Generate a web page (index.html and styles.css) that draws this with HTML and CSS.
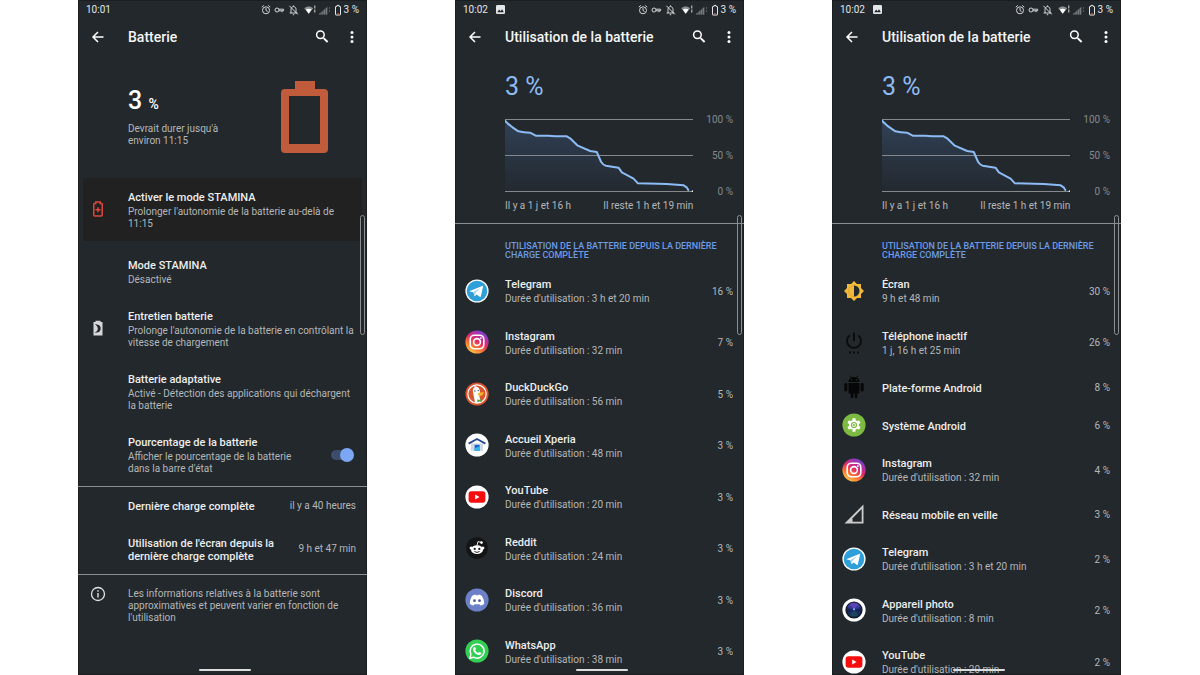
FILE: index.html
```
<!DOCTYPE html>
<html lang="fr">
<head>
    <meta charset="UTF-8">
    <title>Batterie</title>
    <link rel="stylesheet" href="styles.css">
</head>
<body>
    <!-- shared icons -->
    <svg class="sprite" width="0" height="0" aria-hidden="true">
        <defs>
            <linearGradient id="g-insta" x1="0.2" y1="1" x2="0.8" y2="0">
                <stop offset="0" stop-color="#ffd254"/>
                <stop offset="0.3" stop-color="#f9772e"/>
                <stop offset="0.55" stop-color="#e0286c"/>
                <stop offset="0.8" stop-color="#a333b5"/>
                <stop offset="1" stop-color="#5b4fd8"/>
            </linearGradient>
            <linearGradient id="g-photo" x1="0" y1="0" x2="0" y2="1">
                <stop offset="0" stop-color="#5b3bb4"/>
                <stop offset="0.4" stop-color="#25368a"/>
                <stop offset="1" stop-color="#0c2438"/>
            </linearGradient>
            <linearGradient id="g-chart" x1="0" y1="0" x2="0" y2="1">
                <stop offset="0" stop-color="#304056"/>
                <stop offset="1" stop-color="#23292f"/>
            </linearGradient>
        </defs>
        <symbol id="status" viewBox="0 0 82 12">
            <g fill="none" stroke="#d5d6d7" stroke-width="1">
                <circle cx="5" cy="6.3" r="3.5"/>
                <path d="M5 4v2.5l1.6 1M.8 3.2l2-1.8M9.2 3.2l-2-1.8"/>
                <circle cx="16" cy="6" r="2"/>
                <path d="M18 5.2h4.600v1.600H18M21 6.800v1.400"/>
                <path d="M30 9V5.3C30 3.6 31.2 2.6 32.5 2.6S35 3.6 35 5.3V9M28.6 9h7.8M28.4 1.8l8.4 8.6M32.5 1.4v1M31.8 10.7h1.4"/>
            </g>
            <path d="M43.2 4.2C46 1.8 49.4 1.8 52.2 4.2L47.7 9.8z" fill="#8b8f92"/>
            <path d="M44.8 5.6c1.8-1.2 4-1.2 5.8 0l-2.9 4.2z" fill="#fff"/>
            <path d="M53.8 1.5v3M53.8 5.5v3" stroke="#d5d6d7"/>
            <path d="M57.500 10.5l9-8v8z" fill="#53585b"/>
            <path d="M59 10.5V9M61.2 10.5V7.5M63.4 10.5V5.7M65.6 10.5V3.8" stroke="#7b7f82" stroke-width="1"/>
            <path d="M68.5 3v2M68.5 6v2" stroke="#555a5d"/>
            <path d="M75 2.4h1V1.4h2v1h1.1q.4 0 .4.4v7.8q0 .4-.4.4h-4.2q-.4 0-.4-.4V2.8q0-.4.5-.4z" fill="none" stroke="#e4e5e6"/>
            <path d="M76 9.8h2" stroke="#c95a45"/>
        </symbol>
        <symbol id="picture" viewBox="0 0 9 9">
            <rect width="9" height="9" rx="1.2" fill="#e4e5e6"/>
            <path d="M1.2 7.2l2-2.6 1.4 1.6 1.4-2 1.9 3z" fill="#23282c"/>
        </symbol>
        <symbol id="back" viewBox="0 0 16 16">
            <path d="M13.5 8H3M8 3L3 8l5 5" fill="none" stroke="#fff" stroke-width="1.5"/>
        </symbol>
        <symbol id="search" viewBox="0 0 16 16">
            <path d="M9.6 9.1L13.6 13" fill="none" stroke="#fff" stroke-width="1.9"/>
            <circle cx="6.4" cy="5.8" r="3.8" fill="none" stroke="#fff" stroke-width="1.5"/>
        </symbol>
        <symbol id="more" viewBox="0 0 16 16" fill="#fff">
            <circle cx="8" cy="3.5" r="1.5"/><circle cx="8" cy="8" r="1.5"/><circle cx="8" cy="12.5" r="1.5"/>
        </symbol>
        <symbol id="chart" viewBox="0 0 564 219" preserveAspectRatio="none">
            <path d="M0 5Q15 22 40 37Q55 41 75 41L92 50H130L150 52H185L195 58L218 80L255 96L275 99L280 111L288 129Q294 138 302 140L340 146L350 160L385 179L398 193L485 195L535 199L544 205L549 213V217H0z" fill="url(#g-chart)"/>
            <g class="line" fill="none" stroke="#85898c">
                <path d="M0 1.5H564M0 109.5H564M0 217.5H564"/>
            </g>
            <path class="line" d="M0 5Q15 22 40 37Q55 41 75 41L92 50H130L150 52H185L195 58L218 80L255 96L275 99L280 111L288 129Q294 138 302 140L340 146L350 160L385 179L398 193L485 195L535 199L544 205L549 213" fill="none" stroke="#8dbbf4" stroke-width="2" stroke-linejoin="round" stroke-linecap="round"/>
            <circle cx="562" cy="217" r="3" fill="#e4e5e6"/>
        </symbol>

        <symbol id="telegram" viewBox="0 0 24 24">
            <circle cx="12" cy="12" r="11.6" fill="#fff"/>
            <circle cx="12" cy="12" r="10.3" fill="#2f9fda"/>
            <path d="M4.8 12l12.4-5.1q1-.3.8.8l-2.1 9.6q-.3 1-1.2.5l-3.1-2.3-1.6 1.5q-.5.4-.7-.4l-.9-3.4-3.4-.7q-.8-.3-.2-.5z" fill="#fff"/>
            <path d="M8.5 13.1l6.7-4.2-4.8 5-.5 2.7z" fill="#a9cfe6"/>
        </symbol>
        <symbol id="instagram" viewBox="0 0 24 24">
            <circle cx="12" cy="12" r="11.6" fill="url(#g-insta)"/>
            <rect x="5.2" y="5.2" width="13.6" height="13.6" rx="4.2" fill="none" stroke="#fff" stroke-width="1.6"/>
            <circle cx="12" cy="12" r="3.4" fill="none" stroke="#fff" stroke-width="1.6"/>
            <circle cx="15.9" cy="8.1" r=".9" fill="#fff"/>
        </symbol>
        <symbol id="duckduckgo" viewBox="0 0 24 24">
            <circle cx="12" cy="12" r="11.6" fill="#d9532c"/>
            <circle cx="12" cy="12" r="9.2" fill="none" stroke="#fff" stroke-width="1.2"/>
            <path d="M10 20.6L8.2 11.2Q7 6.4 9.8 5.3L8.8 4.2Q14.8 3.6 15 10.2L14.2 13 15.6 20.4Q12.6 21.6 10 20.6z" fill="#fff"/>
            <path d="M13 11.2q3.4-1.4 6-.8 .6.8-1.8 1.5 1.4.3.9 1-1.6 1.2-4.6.6-1.4-1-.5-2.3z" fill="#f7b52d"/>
            <path d="M12 17.2l2 .7 2.4-1.1.6 3-2.4-.3-2 1.1z" fill="#4fae3f"/>
            <circle cx="13.3" cy="8.6" r=".7" fill="#2d4f8e"/>
            <circle cx="9.9" cy="9" r=".7" fill="#2d4f8e"/>
        </symbol>
        <symbol id="xperia" viewBox="0 0 24 24">
            <circle cx="12" cy="12" r="11.6" fill="#fff"/>
            <path d="M6 10.4h12v7.4H6z" fill="#d3d9e2"/>
            <path d="M3.6 10.6L12 6l8.4 4.6" fill="none" stroke="#2b4c93" stroke-width="1.9"/>
            <path d="M9.6 11.8h5v6h-5z" fill="#1769d2"/>
            <path d="M9.6 17.8v-2.6l5-1.6v4.2z" fill="#35b9ea"/>
        </symbol>
        <symbol id="youtube" viewBox="0 0 24 24">
            <circle cx="12" cy="12" r="11.6" fill="#fff"/>
            <rect x="3.6" y="6.2" width="16.8" height="11.6" rx="2.8" fill="#f60d0d"/>
            <path d="M10.2 9.6l4.3 2.4-4.3 2.4z" fill="#fff"/>
        </symbol>
        <symbol id="reddit" viewBox="0 0 24 24">
            <circle cx="12" cy="12" r="10.8" fill="#121415"/>
            <ellipse cx="12" cy="13.7" rx="6" ry="4.4" fill="#fff"/>
            <circle cx="6.2" cy="12" r="1.6" fill="#fff"/><circle cx="17.8" cy="12" r="1.6" fill="#fff"/>
            <path d="M12 9.5l1-3.9 3 .8" fill="none" stroke="#fff" stroke-width=".9"/>
            <circle cx="16.5" cy="6.6" r="1.3" fill="#fff"/>
            <circle cx="9.7" cy="12.9" r="1.1" fill="#121415"/><circle cx="14.3" cy="12.9" r="1.1" fill="#121415"/>
            <path d="M9.4 15.5q2.6 1.8 5.2 0" fill="none" stroke="#121415" stroke-width=".9"/>
        </symbol>
        <symbol id="discord" viewBox="0 0 24 24">
            <circle cx="12" cy="12" r="11.6" fill="#6c80c8"/>
            <path d="M7 7.9q1.8-1.3 3.4-1.4l.4.7h2.4l.4-.7q1.6.1 3.4 1.4 2.2 3.6 2.2 7.8-1.6 1.7-3.8 1.9l-.9-1.4H9.5l-.9 1.4q-2.2-.2-3.8-1.9Q4.8 11.5 7 7.9z" fill="#fff"/>
            <circle cx="9.5" cy="12.7" r="1.4" fill="#4c5c9e"/><circle cx="14.5" cy="12.7" r="1.4" fill="#4c5c9e"/>
        </symbol>
        <symbol id="whatsapp" viewBox="0 0 24 24">
            <circle cx="12" cy="12" r="11.6" fill="#32cf55"/>
            <path d="M4.9 19.2l1-3.8A7 7 0 1 1 8.6 18.2z" fill="none" stroke="#fff" stroke-width="1.4"/>
            <path d="M8.7 8.5q.9-1 1.5-.2l.7 1.6q.1.4-.7 1.3 1 2 3 2.7.9-1.2 1.3-1l1.7.8q.5.3 0 1.2-1 1.5-2.9 1-4-1.2-5.2-5-.1-1.5.6-2.4z" fill="#fff"/>
        </symbol>
        <symbol id="ecran" viewBox="0 0 24 24">
            <path d="M12 2l3 3h4v4l3 3-3 3v4h-4l-3 3-3-3H5v-4l-3-3 3-3V5h4z" fill="#f1b83a"/>
            <path d="M12 6.5a5.5 5.5 0 0 1 0 11z" fill="#23282c"/>
            <path d="M12 6.5a5.5 5.5 0 0 0 0 11" fill="none" stroke="#d9a231" stroke-width=".8"/>
        </symbol>
        <symbol id="power" viewBox="0 0 24 24">
            <path d="M12 2.5v8.5M7.8 5.3a7 7 0 1 0 8.4 0" fill="none" stroke="#0b0c0d" stroke-width="1.9"/>
            <path d="M7 22.5h2M11 22.5h2M15 22.5h2" stroke="#0b0c0d" stroke-width="1.8"/>
        </symbol>
        <symbol id="android" viewBox="0 0 24 24">
            <path d="M6.5 7a5.5 5 0 0 1 11 0zM6.5 8h11v9.5q0 1-1 1h-1.2v3.5a1.3 1.3 0 0 1-2.6 0v-3.5h-1.4v3.5a1.3 1.3 0 0 1-2.6 0v-3.5H7.5q-1 0-1-1z" fill="#060707"/>
            <rect x="2.3" y="8" width="3" height="8.5" rx="1.4" fill="#060707"/><rect x="18.7" y="8" width="3" height="8.5" rx="1.4" fill="#060707"/>
            <path d="M8 .5l1.5 2.6M16 .5l-1.5 2.6" stroke="#060707" stroke-width=".8"/>
            <circle cx="9.6" cy="4.8" r=".6" fill="#3b4043"/><circle cx="14.4" cy="4.8" r=".6" fill="#3b4043"/>
        </symbol>
        <symbol id="systeme" viewBox="0 0 24 24">
            <circle cx="12" cy="12" r="11.6" fill="#7cba42"/>
            <circle cx="12" cy="12" r="5" fill="#fff"/>
            <path d="M12 5.3v13.4M6.2 8.6l11.6 6.8M6.2 15.4l11.6-6.8" stroke="#fff" stroke-width="3"/>
            <circle cx="12" cy="12" r="3.1" fill="#7cba42"/>
            <circle cx="12" cy="12" r="1.9" fill="#fff"/>
            <circle cx="12" cy="12" r="1.1" fill="#7cba42"/>
        </symbol>
        <symbol id="reseau" viewBox="0 0 24 24">
            <path d="M2.5 21.5l19-19v19z" fill="#c9cbcd"/>
            <path d="M10.5 19.7v-3.5l9.2-9.3v12.8z" fill="#23282c"/>
        </symbol>
        <symbol id="photo" viewBox="0 0 24 24">
            <circle cx="12" cy="12" r="11.6" fill="#fff"/>
            <circle cx="12" cy="12" r="8.6" fill="#10151f"/>
            <circle cx="12" cy="12" r="7.4" fill="url(#g-photo)"/>
            <path d="M12 11.5L7.5 6.5Q12 4 16.5 6.5z" fill="#5b45b4"/>
            <path d="M12 13l4.5 4Q12 20 7.5 17z" fill="#1b4558"/>
            <path d="M12 12l7-2v5zM12 12l-7-2v5z" fill="#16254f"/>
            <circle cx="12" cy="11.3" r="1" fill="#8fb5f0"/>
        </symbol>
    </svg>

    <main class="phones">
        <section class="phone">
            <div class="status-bar">
                <span>10:01</span>
                <svg class="status-icons"><use href="#status"/></svg>
                <span class="level">3 %</span>
            </div>
            <header class="app-bar">
                <button type="button" aria-label="Retour"><svg><use href="#back"/></svg></button>
                <h1>Batterie</h1>
                <button type="button" aria-label="Rechercher"><svg><use href="#search"/></svg></button>
                <button type="button" aria-label="Plus d'options"><svg><use href="#more"/></svg></button>
            </header>

            <div class="hero">
                <div>
                    <p class="hero-level">3 <small>%</small></p>
                    <p class="hero-text">Devrait durer jusqu'à environ 11:15</p>
                </div>
                <svg class="hero-battery" viewBox="0 0 47 72">
                    <path d="M14 0h20v8h9q4 0 4 4v56q0 4-4 4H4q-4 0-4-4V12q0-4 4-4h10z" fill="#c05c3c"/>
                    <path d="M8 15h31v48H8z" fill="#23282c"/>
                </svg>
            </div>

            <div class="row banner">
                <svg class="icon" viewBox="0 0 24 24">
                    <path d="M8.5 6.5h1.3V5h4.4v1.5h1.3q.7 0 .7.7v11q0 .7-.7.7h-7q-.7 0-.7-.7v-11q0-.7.7-.7z" fill="none" stroke="#dd473c" stroke-width="1.5"/>
                    <path d="M12 10.2v5M9.5 12.7h5" stroke="#dd473c" stroke-width="1.5"/>
                </svg>
                <div class="row-text">
                    <h2>Activer le mode STAMINA</h2>
                    <p>Prolonger l'autonomie de la batterie au-delà de 11:15</p>
                </div>
            </div>
            <div class="row">
                <div class="row-text">
                    <h2>Mode STAMINA</h2>
                    <p>Désactivé</p>
                </div>
            </div>
            <div class="row">
                <svg class="icon" viewBox="0 0 24 24">
                    <path d="M9.5 6V4.8h5V6h2v13.5h-9V6z" fill="#d5d7d9"/>
                    <path d="M10.8 9q3.8.6 3.2 4-.6 2.7-3.2 3 1.8-1.3 1.6-3.5-.2-2.2-1.6-3.5z" fill="#23282c" stroke="#23282c" stroke-width="1.2"/>
                </svg>
                <div class="row-text">
                    <h2>Entretien batterie</h2>
                    <p>Prolonge l'autonomie de la batterie en contrôlant la vitesse de chargement</p>
                </div>
            </div>
            <div class="row">
                <div class="row-text">
                    <h2>Batterie adaptative</h2>
                    <p>Activé - Détection des applications qui déchargent la batterie</p>
                </div>
            </div>
            <div class="row">
                <label class="row-text" for="percent">
                    <span class="row-title">Pourcentage de la batterie</span>
                    <span class="row-sub">Afficher le pourcentage de la batterie dans la barre d'état</span>
                </label>
                <input class="switch" type="checkbox" id="percent" checked>
            </div>
            <div class="row line-top">
                <div class="row-text"><h2>Dernière charge complète</h2></div>
                <span class="value">il y a 40 heures</span>
            </div>
            <div class="row">
                <div class="row-text"><h2>Utilisation de l'écran depuis la dernière charge complète</h2></div>
                <span class="value">9 h et 47 min</span>
            </div>
            <div class="row line-top info">
                <svg class="icon" viewBox="0 0 24 24" fill="none" stroke="#e1e2e3">
                    <circle cx="12" cy="12" r="6.5" stroke-width="1.3"/>
                    <path d="M12 11v4.5M12 8.3v1.5" stroke-width="1.4"/>
                </svg>
                <div class="row-text">
                    <p>Les informations relatives à la batterie sont approximatives et peuvent varier en fonction de l'utilisation</p>
                </div>
            </div>
            <div class="scrollbar"></div>
            <div class="nav-handle"></div>
        </section>

        <section class="phone">
            <div class="status-bar">
                <span>10:02</span>
                <svg class="status-picture"><use href="#picture"/></svg>
                <svg class="status-icons"><use href="#status"/></svg>
                <span class="level">3 %</span>
            </div>
            <header class="app-bar">
                <button type="button" aria-label="Retour"><svg><use href="#back"/></svg></button>
                <h1>Utilisation de la batterie</h1>
                <button type="button" aria-label="Rechercher"><svg><use href="#search"/></svg></button>
                <button type="button" aria-label="Plus d'options"><svg><use href="#more"/></svg></button>
            </header>
            <div class="usage">
                <p class="usage-level">3 %</p>
                <div class="chart">
                    <svg><use href="#chart"/></svg>
                    <div class="scale"><span>100 %</span><span>50 %</span><span>0 %</span></div>
                    <div class="times"><span>Il y a 1 j et 16 h</span><span>Il reste 1 h et 19 min</span></div>
                </div>
            </div>
            <h2 class="section-title">Utilisation de la batterie depuis la dernière charge complète</h2>
            <ul class="apps">
                <li class="row">
                    <svg class="icon"><use href="#telegram"/></svg>
                    <div class="row-text"><h3>Telegram</h3><p>Durée d'utilisation : 3 h et 20 min</p></div>
                    <span class="value">16 %</span>
                </li>
                <li class="row">
                    <svg class="icon"><use href="#instagram"/></svg>
                    <div class="row-text"><h3>Instagram</h3><p>Durée d'utilisation : 32 min</p></div>
                    <span class="value">7 %</span>
                </li>
                <li class="row">
                    <svg class="icon"><use href="#duckduckgo"/></svg>
                    <div class="row-text"><h3>DuckDuckGo</h3><p>Durée d'utilisation : 56 min</p></div>
                    <span class="value">5 %</span>
                </li>
                <li class="row">
                    <svg class="icon"><use href="#xperia"/></svg>
                    <div class="row-text"><h3>Accueil Xperia</h3><p>Durée d'utilisation : 48 min</p></div>
                    <span class="value">3 %</span>
                </li>
                <li class="row">
                    <svg class="icon"><use href="#youtube"/></svg>
                    <div class="row-text"><h3>YouTube</h3><p>Durée d'utilisation : 20 min</p></div>
                    <span class="value">3 %</span>
                </li>
                <li class="row">
                    <svg class="icon"><use href="#reddit"/></svg>
                    <div class="row-text"><h3>Reddit</h3><p>Durée d'utilisation : 24 min</p></div>
                    <span class="value">3 %</span>
                </li>
                <li class="row">
                    <svg class="icon"><use href="#discord"/></svg>
                    <div class="row-text"><h3>Discord</h3><p>Durée d'utilisation : 36 min</p></div>
                    <span class="value">3 %</span>
                </li>
                <li class="row">
                    <svg class="icon"><use href="#whatsapp"/></svg>
                    <div class="row-text"><h3>WhatsApp</h3><p>Durée d'utilisation : 38 min</p></div>
                    <span class="value">3 %</span>
                </li>
            </ul>
            <div class="scrollbar"></div>
            <div class="nav-handle"></div>
        </section>

        <section class="phone">
            <div class="status-bar">
                <span>10:02</span>
                <svg class="status-picture"><use href="#picture"/></svg>
                <svg class="status-icons"><use href="#status"/></svg>
                <span class="level">3 %</span>
            </div>
            <header class="app-bar">
                <button type="button" aria-label="Retour"><svg><use href="#back"/></svg></button>
                <h1>Utilisation de la batterie</h1>
                <button type="button" aria-label="Rechercher"><svg><use href="#search"/></svg></button>
                <button type="button" aria-label="Plus d'options"><svg><use href="#more"/></svg></button>
            </header>
            <div class="usage">
                <p class="usage-level">3 %</p>
                <div class="chart">
                    <svg><use href="#chart"/></svg>
                    <div class="scale"><span>100 %</span><span>50 %</span><span>0 %</span></div>
                    <div class="times"><span>Il y a 1 j et 16 h</span><span>Il reste 1 h et 19 min</span></div>
                </div>
            </div>
            <h2 class="section-title">Utilisation de la batterie depuis la dernière charge complète</h2>
            <ul class="apps">
                <li class="row">
                    <svg class="icon"><use href="#ecran"/></svg>
                    <div class="row-text"><h3>Écran</h3><p>9 h et 48 min</p></div>
                    <span class="value">30 %</span>
                </li>
                <li class="row">
                    <svg class="icon"><use href="#power"/></svg>
                    <div class="row-text"><h3>Téléphone inactif</h3><p>1 j, 16 h et 25 min</p></div>
                    <span class="value">26 %</span>
                </li>
                <li class="row short">
                    <svg class="icon"><use href="#android"/></svg>
                    <div class="row-text"><h3>Plate-forme Android</h3></div>
                    <span class="value">8 %</span>
                </li>
                <li class="row short">
                    <svg class="icon"><use href="#systeme"/></svg>
                    <div class="row-text"><h3>Système Android</h3></div>
                    <span class="value">6 %</span>
                </li>
                <li class="row">
                    <svg class="icon"><use href="#instagram"/></svg>
                    <div class="row-text"><h3>Instagram</h3><p>Durée d'utilisation : 32 min</p></div>
                    <span class="value">4 %</span>
                </li>
                <li class="row short">
                    <svg class="icon"><use href="#reseau"/></svg>
                    <div class="row-text"><h3>Réseau mobile en veille</h3></div>
                    <span class="value">3 %</span>
                </li>
                <li class="row">
                    <svg class="icon"><use href="#telegram"/></svg>
                    <div class="row-text"><h3>Telegram</h3><p>Durée d'utilisation : 3 h et 20 min</p></div>
                    <span class="value">2 %</span>
                </li>
                <li class="row">
                    <svg class="icon"><use href="#photo"/></svg>
                    <div class="row-text"><h3>Appareil photo</h3><p>Durée d'utilisation : 8 min</p></div>
                    <span class="value">2 %</span>
                </li>
                <li class="row">
                    <svg class="icon"><use href="#youtube"/></svg>
                    <div class="row-text"><h3>YouTube</h3><p>Durée d'utilisation : 20 min</p></div>
                    <span class="value">2 %</span>
                </li>
            </ul>
            <div class="scrollbar"></div>
            <div class="nav-handle"></div>
        </section>
    </main>
</body>
</html>
```

FILE: styles.css
```
*{
    box-sizing: border-box;
    margin: 0;
    padding: 0;
}
body{
    background-color: white;
    font-family: Roboto, "Liberation Sans", sans-serif;
    font-size: 10px;
    line-height: 12px;
    color: #b4b7b9;
}
.sprite{
    position: absolute;
}
.phones{
    display: grid;
    grid-template-columns: repeat(3, 1fr);
    gap: 88px;
    padding: 0 79px 0 78px;
}
.phone{
    position: relative;
    height: 100vh;
    overflow: hidden;
    background-color: #23282c;
    box-shadow: inset 0 0 0 1px #1a1e21;
}

/* top of the screen */
.status-bar{
    display: flex;
    align-items: center;
    height: 19px;
    padding: 0 8px;
    color: #e4e5e6;
}
.status-picture{
    width: 9px;
    height: 9px;
    margin-left: 8px;
}
.status-icons{
    width: 82px;
    height: 12px;
    margin-left: auto;
    margin-right: 1px;
}
.app-bar{
    display: flex;
    align-items: center;
    gap: 14px;
    height: 36px;
    padding: 0 7px 0 12px;
}
.app-bar h1{
    flex: 1;
    margin-left: 8px;
    font-size: 14px;
    line-height: 18px;
    font-weight: 500;
    color: #f4f5f5;
}
.app-bar button{
    width: 16px;
    height: 16px;
    border: 0;
    background: none;
    cursor: pointer;
}
.app-bar svg{
    display: block;
    width: 16px;
    height: 16px;
}

/* battery summary */
.hero{
    display: flex;
    justify-content: space-between;
    padding: 26px 39px 25px 50px;
}
.hero-level{
    margin-top: 4px;
    font-size: 25px;
    line-height: 32px;
    font-weight: 500;
    color: white;
}
.hero-level small{
    font-size: 14px;
}
.hero-text{
    max-width: 100px;
    margin-top: 3px;
}
.hero-battery{
    width: 47px;
    height: 72px;
}

/* settings and app rows */
.row{
    display: grid;
    grid-template-columns: 40px 1fr auto;
    align-items: center;
    padding: 0 11px 0 10px;
}
.row-text{
    grid-column: 2;
    padding: 13px 0 11px;
}
.row h2, .row h3, .row-title{
    display: block;
    font-size: 11px;
    line-height: 13px;
    font-weight: 500;
    color: #eceded;
}
.row p, .row-sub{
    display: block;
}
.row h2 + p, .row h3 + p, .row-sub{
    margin-top: 2px;
}
.icon{
    width: 24px;
    height: 24px;
    margin-bottom: 2px;
}
.phone > .row .icon{
    margin-left: -2px;
}
.value{
    margin-left: 12px;
    text-align: right;
}
.banner{
    margin: 0 5px 5px;
    padding: 0 6px 0 5px;
    background-color: #212121;
}
.line-top{
    border-top: 1px solid #8b8f91;
}
.info{
    align-items: start;
}
.info .icon{
    margin-top: 7px;
}
.switch{
    position: relative;
    appearance: none;
    width: 23px;
    height: 14px;
    margin: 0 2px 0 24px;
    cursor: pointer;
}
.switch::before{
    content: "";
    position: absolute;
    inset: 2px 3px 2px 0;
    border-radius: 5px;
    background-color: #3c4d6b;
}
.switch::after{
    content: "";
    position: absolute;
    top: 0;
    left: 0;
    width: 14px;
    height: 14px;
    border-radius: 50%;
    background-color: #a3a6a8;
}
.switch:checked::after{
    left: auto;
    right: 0;
    background-color: #7ba7f5;
}

/* battery usage */
.usage{
    padding: 16px 11px 11px 50px;
    border-bottom: 1px solid #8b8f91;
}
.usage-level{
    font-size: 25px;
    line-height: 32px;
    color: #8dbbf4;
}
.chart{
    display: grid;
    grid-template-columns: 1fr auto;
    column-gap: 13px;
    margin-top: 16px;
}
.chart svg{
    width: 100%;
    height: 73px;
}
.line, .line path{
    vector-effect: non-scaling-stroke;
}
.scale{
    display: flex;
    flex-direction: column;
    justify-content: space-between;
    margin: -5px 0 -6px;
    text-align: right;
    color: #85898c;
}
.times{
    display: flex;
    justify-content: space-between;
    margin-top: 8px;
}
.section-title{
    padding: 18px 11px 6px 50px;
    font-size: 9px;
    line-height: 9px;
    font-weight: 500;
    text-transform: uppercase;
    color: #6c9be6;
}
.apps{
    list-style: none;
}
.apps .row{
    min-height: 51px;
}
.apps .row:nth-child(even){
    min-height: 52px;
}
.apps .row.short{
    min-height: 38px;
}
.apps .row-text{
    padding: 12px 0;
}

/* overlays */
.scrollbar{
    position: absolute;
    top: 215px;
    right: 2px;
    width: 5px;
    height: 120px;
    border: 1px solid #8b8f91;
    border-radius: 3px;
}
.nav-handle{
    position: absolute;
    bottom: 4px;
    left: 42%;
    width: 52px;
    height: 2px;
    border-radius: 1px;
    background-color: #dcdddd;
}
```
